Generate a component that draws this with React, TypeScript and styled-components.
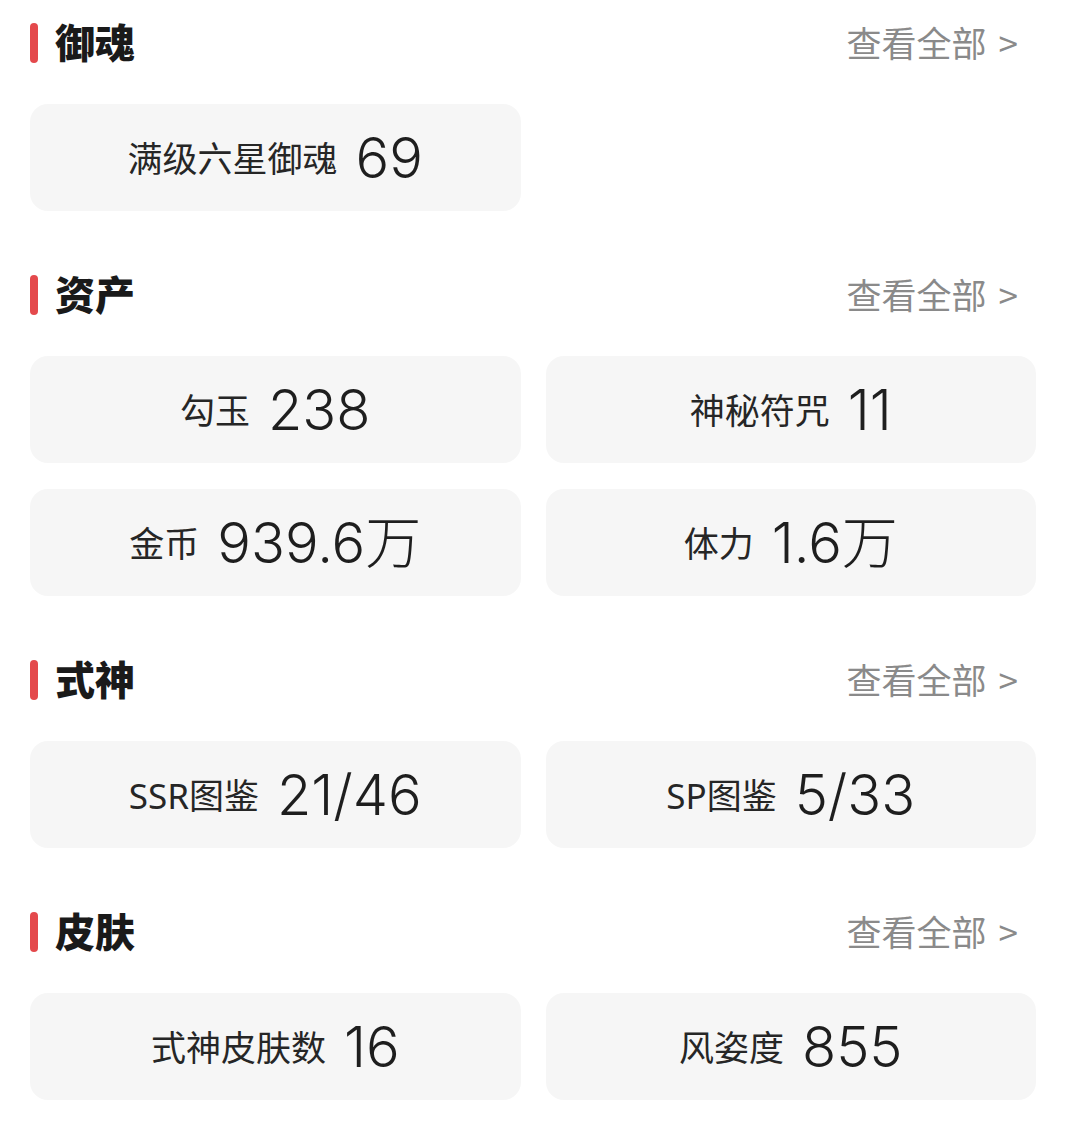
import React from "react";
import styled, { createGlobalStyle } from "styled-components";

const GlobalStyle = createGlobalStyle`
  html, body { margin: 0; padding: 0; background: #ffffff; }
  body { font-family: "Noto Sans CJK SC", "Noto Sans", sans-serif; }
`;

const Page = styled.div`
  padding: 23px 36px 40px 30px;
  display: flex;
  flex-direction: column;
  gap: 64px;
`;

const Section = styled.section`
  display: flex;
  flex-direction: column;
  gap: 41px;
`;

const Header = styled.div`
  height: 40px;
  display: flex;
  align-items: center;
  justify-content: space-between;
  padding-right: 18px;
`;

const TitleWrap = styled.div`
  display: flex;
  align-items: center;
  gap: 17px;
`;

const Bar = styled.span`
  width: 8px;
  height: 40px;
  border-radius: 4px;
  background: #e4494c;
`;

const Title = styled.h2`
  margin: 0;
  font-size: 40px;
  line-height: 40px;
  font-weight: 900;
  color: #1a1a1a;
  font-family: "Noto Sans CJK SC", sans-serif;
  position: relative;
  top: -2px;
`;

const More = styled.a`
  font-size: 35px;
  line-height: 40px;
  color: #8a8a8a;
  text-decoration: none;
  font-family: "Noto Sans CJK SC", sans-serif;
  display: flex;
  align-items: center;
  gap: 12px;
  position: relative;
  top: -1px;
`;

const Grid = styled.div`
  display: grid;
  grid-template-columns: 1fr 1fr;
  column-gap: 25px;
  row-gap: 26px;
`;

const Card = styled.div`
  height: 107px;
  border-radius: 18px;
  background: #f6f6f6;
  display: flex;
  align-items: center;
  justify-content: center;
  gap: 18px;
`;

const Label = styled.span`
  font-size: 35px;
  color: #262626;
  font-family: "Noto Sans", "Noto Sans CJK SC", sans-serif;
  line-height: 1;
  position: relative;
  top: 1px;
`;

const Value = styled.span`
  font-size: 56px;
  font-weight: 300;
  color: #1e1e1e;
  font-family: Inter, "Noto Sans CJK SC", sans-serif;
  line-height: 1;
`;

type Item = { label: string; value: string };
type Group = { title: string; items: Item[] };

const groups: Group[] = [
  { title: "御魂", items: [{ label: "满级六星御魂", value: "69" }] },
  {
    title: "资产",
    items: [
      { label: "勾玉", value: "238" },
      { label: "神秘符咒", value: "11" },
      { label: "金币", value: "939.6万" },
      { label: "体力", value: "1.6万" },
    ],
  },
  {
    title: "式神",
    items: [
      { label: "SSR图鉴", value: "21/46" },
      { label: "SP图鉴", value: "5/33" },
    ],
  },
  {
    title: "皮肤",
    items: [
      { label: "式神皮肤数", value: "16" },
      { label: "风姿度", value: "855" },
    ],
  },
];

export default function App() {
  return (
    <>
      <GlobalStyle />
      <Page>
        {groups.map((g) => (
          <Section key={g.title}>
            <Header>
              <TitleWrap>
                <Bar />
                <Title>{g.title}</Title>
              </TitleWrap>
              <More href="#">
                <span>查看全部</span>
                <span>&gt;</span>
              </More>
            </Header>
            <Grid>
              {g.items.map((it) => (
                <Card key={it.label}>
                  <Label>{it.label}</Label>
                  <Value>{it.value}</Value>
                </Card>
              ))}
            </Grid>
          </Section>
        ))}
      </Page>
    </>
  );
}
